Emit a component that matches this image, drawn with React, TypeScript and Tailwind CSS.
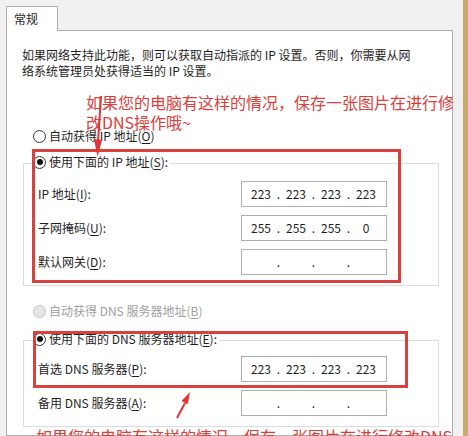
import { Fragment } from "react";

const ui = "font-['Noto_Sans_CJK_SC','Noto_Sans',sans-serif]";

const Radio = ({ checked, disabled }: { checked?: boolean; disabled?: boolean }) => (
  <span
    className={`w-[13px] h-[13px] rounded-full border flex items-center justify-center shrink-0 ${
      disabled ? "border-[#c4c4c4] bg-[#e6e6e6]" : "border-[#333] bg-white"
    }`}
  >
    {checked && <span className="w-[6px] h-[6px] rounded-full bg-[#111]" />}
  </span>
);

const Key = ({ k }: { k: string }) => (
  <>
    (<span className="underline underline-offset-2">{k}</span>)
  </>
);

const IpBox = ({ parts }: { parts: string[] }) => (
  <div className="w-[146px] h-[26px] border border-[#acacac] bg-white flex items-center pl-[5px] text-[12px] text-[#1e1e1e]">
    {parts.map((p, i) => (
      <Fragment key={i}>
        {i > 0 && <span className="w-[7px] text-center">.</span>}
        <span className="w-[28px] text-center">{p}</span>
      </Fragment>
    ))}
  </div>
);

const Row = ({ label, parts }: { label: React.ReactNode; parts: string[] }) => (
  <div className="flex items-center h-[26px]">
    <span className="w-[203px] whitespace-nowrap">{label}</span>
    <IpBox parts={parts} />
  </div>
);

const empty = ["", "", "", ""];

export default function App() {
  return (
    <div className={`${ui} relative w-[468px] h-[436px] overflow-hidden bg-[#f0f0f0] flex text-[12px] text-[#1e1e1e]`}>
      <div className="ml-[6px] pt-[6px] w-[447px] flex flex-col">
        <div className="relative z-10 w-[52px] h-[25px] bg-white border-x border-t border-[#adadad] flex items-center pl-[7px]">
          常规
        </div>
        <div className="-mt-px flex-1 bg-white border border-[#adadad] pl-[15px]">
          <p className="mt-[16px] leading-[16px] whitespace-nowrap">
            如果网络支持此功能，则可以获取自动指派的 IP 设置。否则，你需要从网
            <br />
            络系统管理员处获得适当的 IP 设置。
          </p>

          <div className="mt-[47px] pl-[11px] h-[20px] flex items-center gap-[3px]">
            <Radio />
            <span>
              自动获得 IP 地址<Key k="O" />
            </span>
          </div>

          <div className="mt-[17px] ml-[1px] w-[416px] border border-[#dcdcdc] pl-[14px] pb-[10px]">
            <div className="-mt-[12px] -ml-[5px] w-fit h-[20px] bg-white flex items-center gap-[3px] pr-[2px]">
              <Radio checked />
              <span>
                使用下面的 IP 地址<Key k="S" />:
              </span>
            </div>
            <div className="mt-[9px] flex flex-col gap-[8px]">
              <Row label={<>IP 地址<Key k="I" />:</>} parts={["223", "223", "223", "223"]} />
              <Row label={<>子网掩码<Key k="U" />:</>} parts={["255", "255", "255", "0"]} />
              <Row label={<>默认网关<Key k="D" />:</>} parts={empty} />
            </div>
          </div>

          <div className="mt-[15px] pl-[11px] h-[20px] flex items-center gap-[3px] text-[#a0a0a0]">
            <Radio disabled />
            <span>
              自动获得 DNS 服务器地址<Key k="B" />
            </span>
          </div>

          <div className="mt-[19px] ml-[1px] w-[416px] border border-[#dcdcdc] pl-[14px] pb-[10px]">
            <div className="-mt-[12px] -ml-[5px] w-fit h-[20px] bg-white flex items-center gap-[3px] pr-[2px]">
              <Radio checked />
              <span>
                使用下面的 DNS 服务器地址<Key k="E" />:
              </span>
            </div>
            <div className="mt-[7px] flex flex-col gap-[8px]">
              <Row label={<>首选 DNS 服务器<Key k="P" />:</>} parts={["223", "223", "223", "223"]} />
              <Row label={<>备用 DNS 服务器<Key k="A" />:</>} parts={empty} />
            </div>
          </div>
        </div>
      </div>
      <div className="w-[10px]" />
      <div className="w-[5px] bg-[#c9ac69]" />

      {/* annotations drawn over the screenshot */}
      <div className="absolute left-[32px] top-[149px] w-[369px] h-[134px] border-[3px] border-[#d9413d]" />
      <div className="absolute left-[33px] top-[331px] w-[375px] h-[57px] border-[3px] border-[#d9413d]" />
      <p className="absolute left-[86px] top-[92px] text-[16px] leading-[20px] text-[#d8403c] whitespace-nowrap">
        如果您的电脑有这样的情况，保存一张图片在进行修
        <br />
        改DNS操作哦~
      </p>
      <p className="absolute left-[36px] top-[426px] text-[16px] leading-[20px] text-[#d8403c] whitespace-nowrap">
        如果您的电脑有这样的情况，保存一张图片在进行修改DNS
      </p>
      <svg className="absolute inset-0 pointer-events-none" width="468" height="436">
        <line x1="101" y1="96" x2="98" y2="142" stroke="#e0343a" strokeWidth="2" />
        <polygon points="94,139 102,140 97.5,157" fill="#e0343a" />
        <line x1="177" y1="418" x2="185" y2="403" stroke="#e0343a" strokeWidth="2" />
        <polygon points="187.7,404.3 181.5,401.1 190,392" fill="#e0343a" />
      </svg>
    </div>
  );
}
